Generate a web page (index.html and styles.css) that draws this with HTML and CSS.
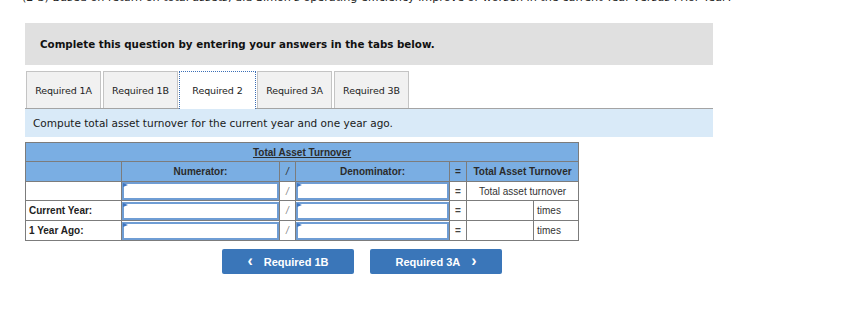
FILE: index.html
```html
<!DOCTYPE html>
<html>
<head>
<meta charset="utf-8">
<link rel="stylesheet" href="styles.css">
</head>
<body>
<div class="page">
  <p class="lead">(2-b) Based on return on total assets, did Simon's operating efficiency improve or worsen in the current Year versus Prior Year?</p>
  <div class="notice">Complete this question by entering your answers in the tabs below.</div>
  <div class="tabs">
    <div class="tab">Required 1A</div>
    <div class="tab">Required 1B</div>
    <div class="tab active">Required 2</div>
    <div class="tab">Required 3A</div>
    <div class="tab">Required 3B</div>
  </div>
  <div class="prompt">Compute total asset turnover for the current year and one year ago.</div>
  <table class="grid">
    <colgroup>
      <col class="c-label"><col class="c-num"><col class="c-slash"><col class="c-den"><col class="c-eq"><col class="c-res"><col class="c-unit">
    </colgroup>
    <tr class="head short">
      <th colspan="7" class="title"><span>Total Asset Turnover</span></th>
    </tr>
    <tr class="head">
      <th></th>
      <th>Numerator:</th>
      <th class="hslash">/</th>
      <th>Denominator:</th>
      <th>=</th>
      <th colspan="2">Total Asset Turnover</th>
    </tr>
    <tr class="short">
      <td class="label"></td>
      <td class="in"><div class="field"></div></td>
      <td class="slash">/</td>
      <td class="in"><div class="field"></div></td>
      <td class="eq">=</td>
      <td colspan="2" class="center">Total asset turnover</td>
    </tr>
    <tr>
      <td class="label">Current Year:</td>
      <td class="in"><div class="field"></div></td>
      <td class="slash">/</td>
      <td class="in"><div class="field"></div></td>
      <td class="eq">=</td>
      <td></td>
      <td class="unit">times</td>
    </tr>
    <tr>
      <td class="label">1 Year Ago:</td>
      <td class="in"><div class="field"></div></td>
      <td class="slash">/</td>
      <td class="in"><div class="field"></div></td>
      <td class="eq">=</td>
      <td></td>
      <td class="unit">times</td>
    </tr>
  </table>
  <div class="nav">
    <button class="btn"><span class="chev">&lsaquo;</span>Required 1B</button>
    <button class="btn">Required 3A<span class="chev r">&rsaquo;</span></button>
  </div>
</div>
</body>
</html>
```
FILE: styles.css
```css
html, body {
  margin: 0;
  padding: 0;
  background: #fff;
}
.page {
  width: 688px;
  padding-left: 25px;
  font-family: "DejaVu Sans", Verdana, sans-serif;
  color: #222;
}
.lead {
  margin: -9px 0 0 -3px;
  font-size: 11.2px;
  line-height: 14px;
  white-space: nowrap;
  color: #222;
}
.notice {
  margin-top: 18px;
  height: 42px;
  background: #e0e0e0;
  display: flex;
  align-items: center;
  padding-left: 15px;
  font-weight: bold;
  font-size: 10.3px;
  color: #111;
}
.tabs {
  margin-top: 6px;
  display: flex;
  gap: 2px;
  padding-left: 1px;
  border-bottom: 1px solid #a4a4a4;
  height: 37px;
}
.tab {
  box-sizing: border-box;
  width: 75px;
  height: 37px;
  background: #f1f1f1;
  border: 1px solid #c4c4c4;
  border-bottom: none;
  display: flex;
  align-items: center;
  justify-content: center;
  font-size: 9.5px;
  letter-spacing: -0.1px;
  color: #222;
}
.tab.active {
  width: 77px;
  margin: 0 -1px 0 -1px;
  height: 38px;
  background: #fff;
  border: 1px dotted #3b6fb6;
  border-bottom: none;
  position: relative;
  z-index: 1;
}
.prompt {
  height: 28px;
  background: #d9eaf8;
  display: flex;
  align-items: center;
  padding-left: 8px;
  font-size: 10.5px;
  color: #1a1a1a;
}
.grid {
  margin-top: 5px;
  border-collapse: collapse;
  table-layout: fixed;
  width: 554px;
  font-family: "Liberation Sans", Arial, sans-serif;
  font-size: 10px;
  color: #333;
}
.c-label { width: 96px; }
.c-num { width: 158px; }
.c-slash { width: 16px; }
.c-den { width: 154px; }
.c-eq { width: 17px; }
.c-res { width: 67px; }
.c-unit { width: 45px; }
.grid th, .grid td {
  border: 1px solid #7c7c7c;
  padding: 0;
  height: 19px;
}
.grid tr.short th, .grid tr.short td {
  height: 18px;
}
.grid tr.head th {
  background: #7aaee3;
  font-weight: bold;
  text-align: center;
  color: #2b2b2b;
}
.grid tr.head th.hslash {
  font-weight: normal;
  font-style: italic;
}
.grid th.title span {
  text-decoration: underline;
}
.grid td.label {
  font-weight: bold;
  padding-left: 3px;
  color: #222;
}
.grid td.slash {
  text-align: center;
  color: #888;
  font-style: italic;
}
.grid td.eq {
  text-align: center;
  font-weight: bold;
  color: #444;
}
.grid td.center {
  text-align: center;
}
.grid td.unit {
  padding-left: 3px;
}
.grid td.in {
  padding: 0;
}
.field {
  position: relative;
  box-sizing: border-box;
  height: 18px;
  border: 2px solid #6f9dd4;
  background: #fff;
}
.field::before {
  content: "";
  position: absolute;
  left: -1px;
  top: -1px;
  border-left: 5px solid #3f76c0;
  border-top: 2px solid transparent;
  border-bottom: 2px solid transparent;
}
.nav {
  margin-top: 8px;
  display: flex;
  justify-content: center;
  gap: 16px;
  padding-right: 14px;
}
.btn {
  width: 132px;
  height: 25px;
  background: #3a76b9;
  border: none;
  border-radius: 2px;
  color: #fff;
  font-family: "Liberation Sans", Arial, sans-serif;
  font-weight: bold;
  font-size: 11px;
  display: flex;
  align-items: center;
  justify-content: center;
  padding: 0;
}
.chev {
  font-size: 16px;
  margin-right: 11px;
  line-height: 1;
  position: relative;
  top: -1px;
}
.chev.r {
  margin-right: 0;
  margin-left: 11px;
}
```
